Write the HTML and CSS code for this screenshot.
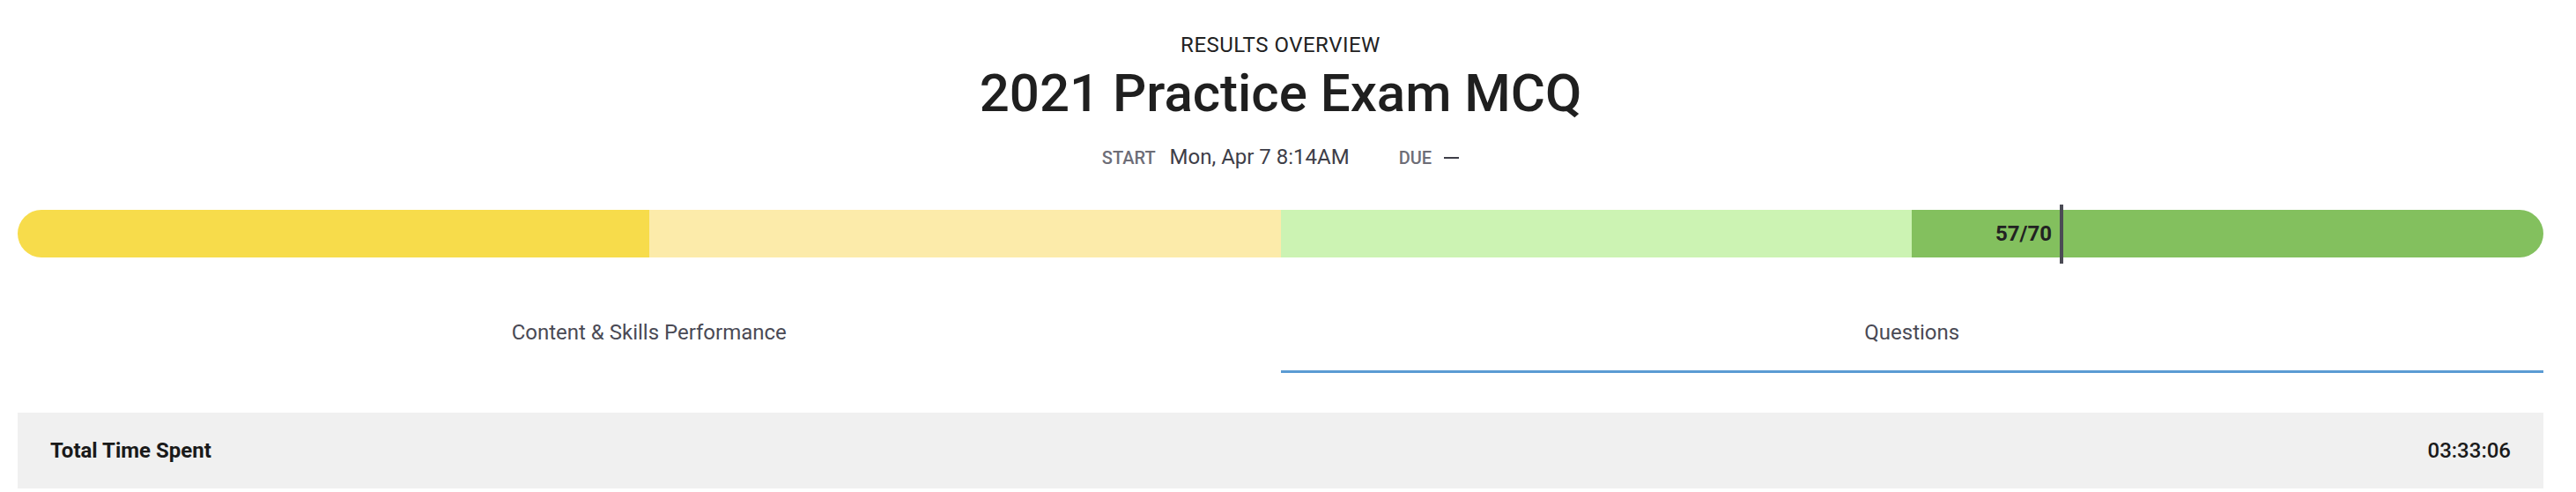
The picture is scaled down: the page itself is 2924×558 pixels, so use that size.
FILE: index.html
```html
<!DOCTYPE html>
<html lang="en">
<head>
<meta charset="utf-8">
<title>Results Overview</title>
<link rel="stylesheet" href="styles.css">
</head>
<body>
<div class="page">
  <header class="header">
    <div class="eyebrow">RESULTS OVERVIEW</div>
    <h1 class="title">2021 Practice Exam MCQ</h1>
    <div class="meta">
      <span class="meta-label">START</span>
      <span class="meta-value">Mon, Apr 7 8:14AM</span>
      <span class="meta-label due">DUE</span>
      <span class="meta-dash"></span>
    </div>
  </header>

  <div class="score-bar">
    <div class="seg seg-1"></div>
    <div class="seg seg-2"></div>
    <div class="seg seg-3"></div>
    <div class="seg seg-4"></div>
    <div class="marker" style="left: 80.85%;">
      <span class="marker-label">57/70</span>
    </div>
  </div>

  <nav class="tabs">
    <div class="tab">Content &amp; Skills Performance</div>
    <div class="tab tab-active">Questions</div>
  </nav>

  <div class="summary">
    <span class="summary-label">Total Time Spent</span>
    <span class="summary-value">03:33:06</span>
  </div>
</div>
</body>
</html>
```

FILE: styles.css
```css
* { box-sizing: border-box; }

html, body {
  margin: 0;
  padding: 0;
  background: #ffffff;
}

body {
  font-family: Roboto, "Noto Sans", "Liberation Sans", sans-serif;
  color: #202020;
}

.page {
  padding: 0 37px 0 20px;
}

.header {
  display: flex;
  flex-direction: column;
  align-items: center;
  padding-top: 37px;
}

.eyebrow {
  font-size: 24px;
  line-height: 28px;
  font-weight: 400;
  letter-spacing: 0.5px;
  color: #222222;
}

.title {
  margin: 5px 0 0;
  font-size: 60px;
  line-height: 72px;
  font-weight: 500;
  color: #1f1f1f;
}

.meta {
  margin-top: 22px;
  display: flex;
  align-items: baseline;
  line-height: 28px;
}

.meta-label {
  font-size: 20px;
  font-weight: 500;
  color: #6d6d77;
}

.meta-value {
  font-size: 24px;
  color: #3e3e48;
  margin-left: 16px;
}

.meta-label.due {
  margin-left: 56px;
}

.meta-dash {
  display: inline-block;
  width: 17px;
  height: 2px;
  background: #3e3e48;
  margin-left: 14px;
  align-self: center;
}

.score-bar {
  position: relative;
  margin-top: 45px;
  height: 54px;
  display: flex;
}

.seg {
  flex: 1;
}

.seg-1 { background: #f7dc4b; border-radius: 27px 0 0 27px; }
.seg-2 { background: #fcebaa; }
.seg-3 { background: #ccf3b3; }
.seg-4 { background: #83c05e; border-radius: 0 27px 27px 0; }

.marker {
  position: absolute;
  top: -6px;
  bottom: -7px;
  width: 4px;
  background: #4b4b55;
}

.marker-label {
  position: absolute;
  right: 13px;
  top: 6px;
  line-height: 54px;
  font-size: 24px;
  font-weight: 700;
  color: #222222;
  white-space: nowrap;
}

.tabs {
  margin-top: 41px;
  display: flex;
}

.tab {
  flex: 1;
  text-align: center;
  font-size: 24px;
  line-height: 28px;
  color: #4a4a55;
  padding: 30px 0 29px;
  border-bottom: 3px solid transparent;
}

.tab-active {
  border-bottom-color: #5b9bd3;
}

.summary {
  margin-top: 45px;
  background: #f0f0f0;
  padding: 29px 37px;
  display: flex;
  justify-content: space-between;
  font-size: 24px;
  line-height: 28px;
  font-weight: 700;
  color: #1a1a1a;
}

.summary-value {
  font-weight: 500;
}
```
